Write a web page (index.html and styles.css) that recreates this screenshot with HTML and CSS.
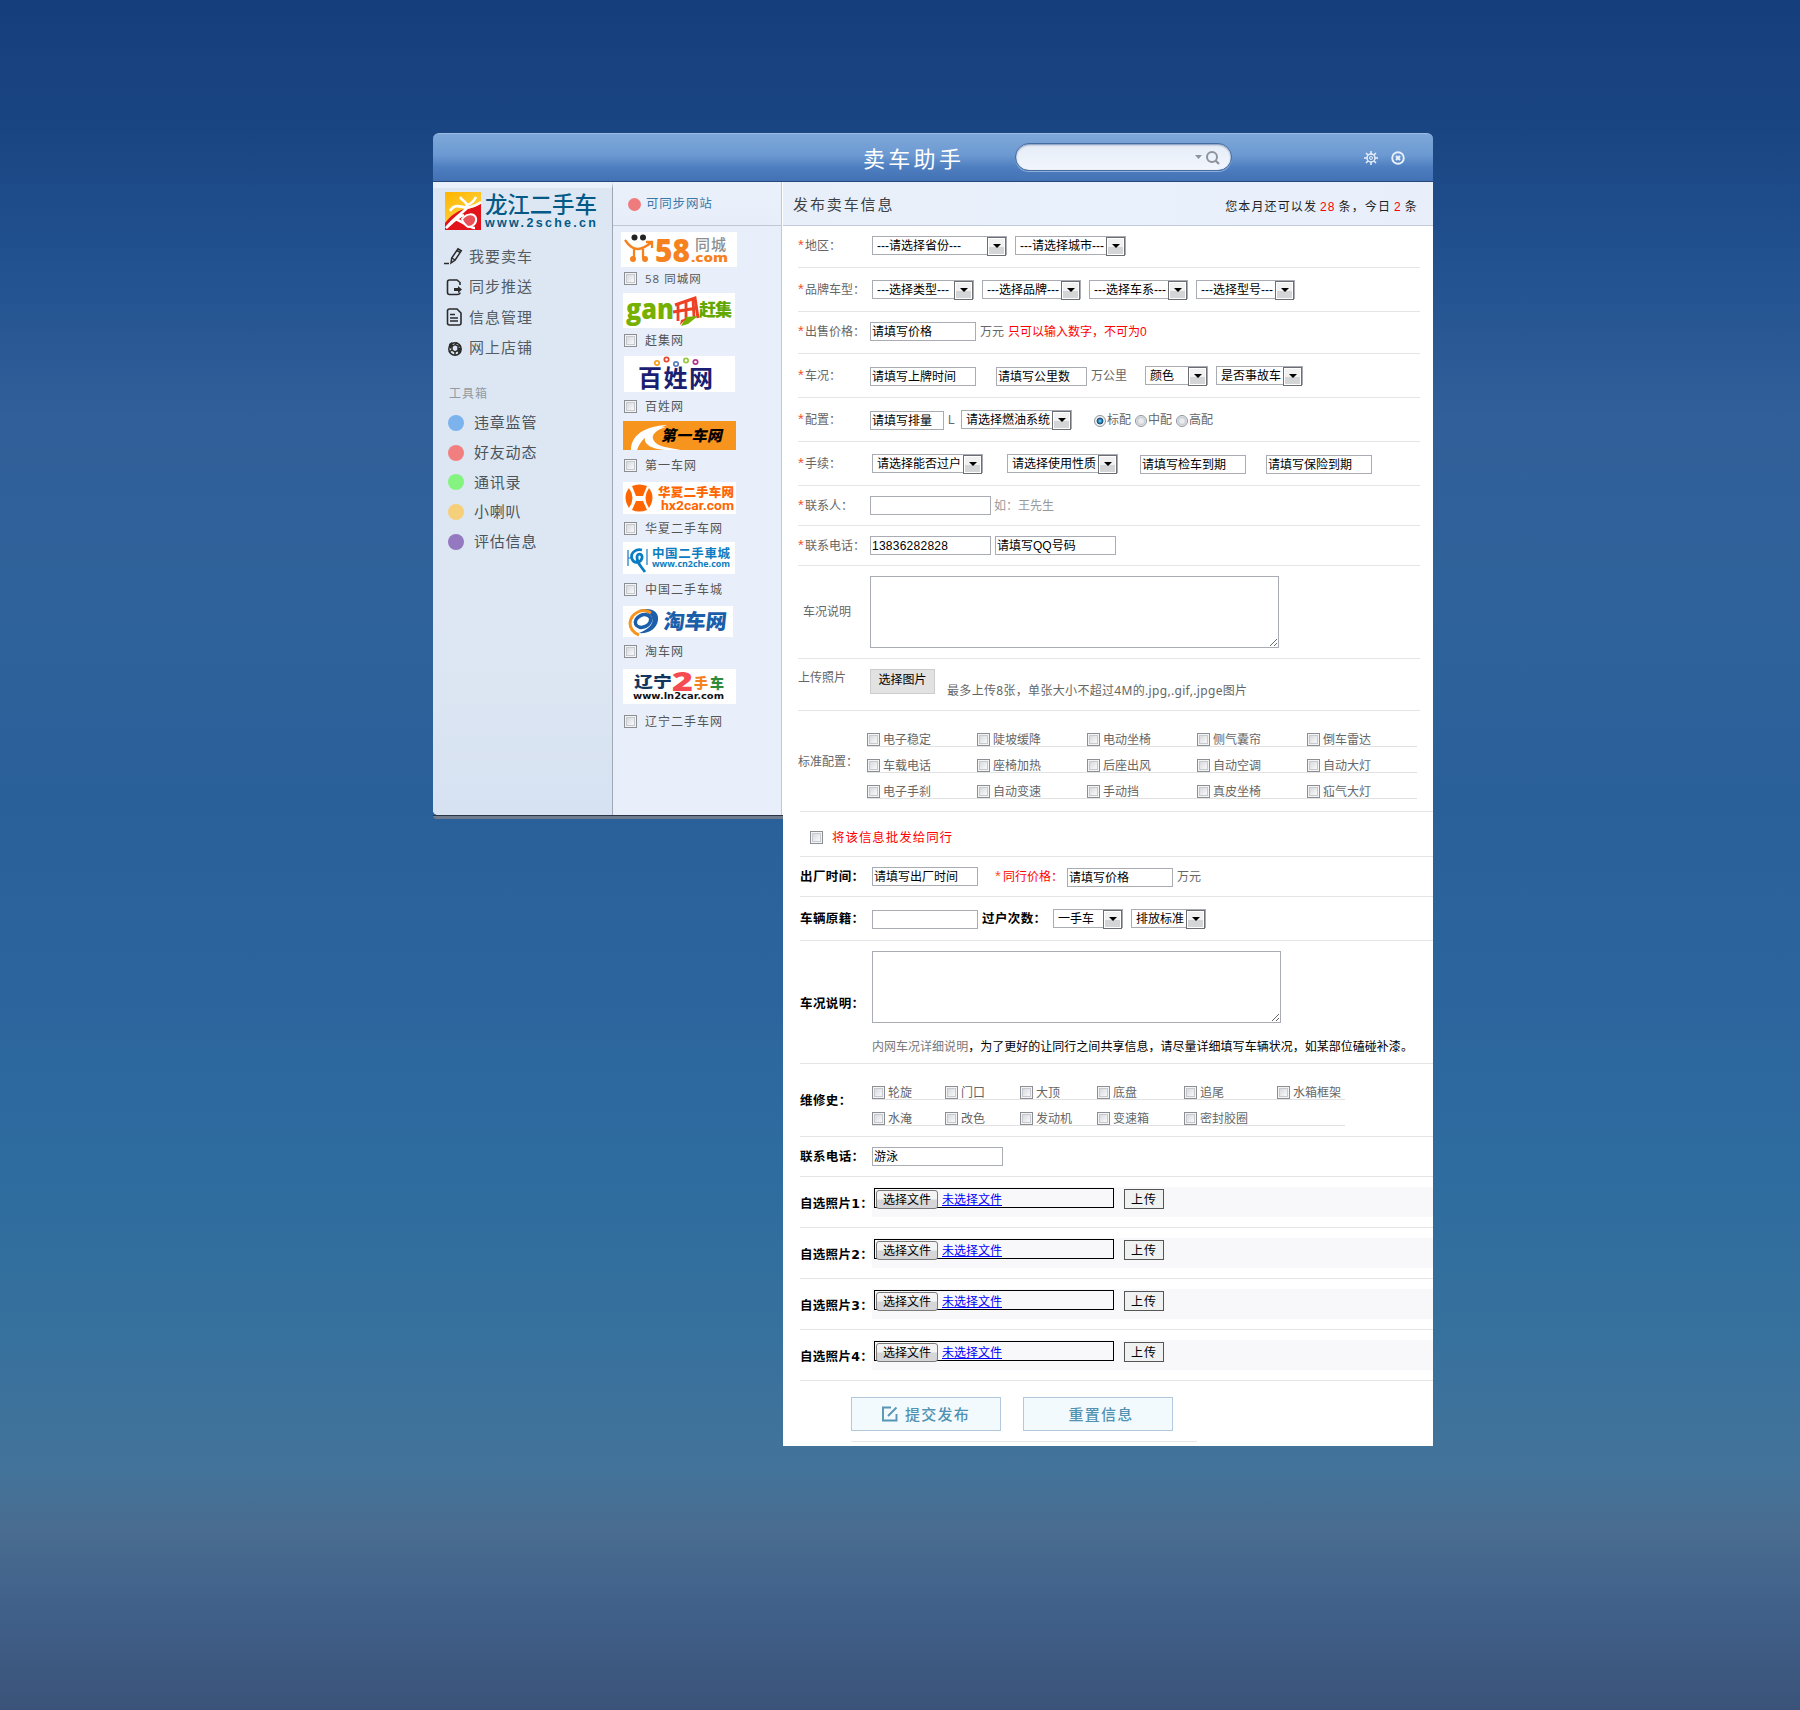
FILE: index.html
```html
<!DOCTYPE html>
<html lang="zh-CN">
<head>
<meta charset="utf-8">
<title>卖车助手</title>
<link rel="stylesheet" href="styles.css">
</head>
<body>
<div class="window">
  <header class="titlebar">
    <h1>卖车助手</h1>
    <div class="search">
      <svg width="26" height="16" viewBox="0 0 26 16"><path d="M0 5h7l-3.500 4z" fill="#8d939d"/><circle cx="17" cy="7" r="5" fill="none" stroke="#8d939d" stroke-width="2"/><path d="M20.500 10.500l3.500 3.500" stroke="#8d939d" stroke-width="2.200"/></svg>
    </div>
    <div class="tools">
      <svg width="14" height="14" viewBox="0 0 14 14" fill="none" stroke="#e9f0fa"><circle cx="7" cy="7" r="4" stroke-width="1.500"/><circle cx="7" cy="7" r="1.500"/><path d="M7 0v3M7 11v3M0 7h3M11 7h3M2 2l2 2M10 10l2 2M12 2l-2 2M4 10l-2 2" stroke-width="1.500"/></svg>
      <svg width="14" height="14" viewBox="0 0 14 14" fill="none" stroke="#e9f0fa"><circle cx="7" cy="7" r="5.800" stroke-width="1.900"/><path d="M5 5l4 4M9 5l-4 4" stroke-width="2.200"/></svg>
    </div>
  </header>

  <div class="body">
    <div class="rails">
      <div class="rail-cols">
        <nav class="nav">
          <svg class="brand" width="154" height="40" viewBox="0 0 154 40">
            <defs><linearGradient id="sun" x1="0" y1="0" x2=".6" y2="1"><stop offset="0" stop-color="#ffb400"/><stop offset="1" stop-color="#ffd84a"/></linearGradient></defs>
            <rect y="1" width="36" height="38" fill="url(#sun)"/>
            <path d="M0 32C6 24 14 19 20 18C26 18 31 15 36 13V39H0z" fill="#e3131c"/>
            <path d="M5 20C9 13 15 15 22 17M15 6c3 5 8 5 7 11C17 22 8 28 1 37C8 31 12 26 19 24M22 14C26 13 29 10 31 6M21 17C27 16 32 14 36 11M10 28c7 2 14 9 20 9" fill="none" stroke="#fff" stroke-width="2.600"/>
            <path d="M17 28c5-6 12-6 14-1c1 5-3 9-8 9c-3-2-5-4-6-8z" fill="#ea5058" stroke="#fff" stroke-width="2"/>
            <text x="40" y="22" class="brand-name" textLength="112">龙江二手车</text>
            <text x="40" y="36" class="brand-url" textLength="111">www.2sche.cn</text>
          </svg>
          <ul class="menu">
            <li><svg width="18" height="18" viewBox="0 0 18 18" fill="none" stroke="#2b2b2b" stroke-width="1.500"><path d="M-1 16.500h5"/><path d="M6 16l.7-5L13 1.800l3.300 2L10 13.200zM12 3.500l3.300 2M7 11l3 2"/></svg>我要卖车</li>
            <li><svg width="18" height="18" viewBox="0 0 18 18" fill="none" stroke="#2b2b2b" stroke-width="1.600"><path d="M15 7V4.500L12 2H4.500Q2.500 2 2.500 4v10.500q0 2 2 2H12q3 0 3-2"/><path d="M9 10h4V8l4 3.500-4 3.500V13H9z" fill="#2b2b2b" stroke="none"/></svg>同步推送</li>
            <li><svg width="18" height="18" viewBox="0 0 18 18" fill="none" stroke="#2b2b2b" stroke-width="1.600"><path d="M4.500 1H12l4 4v10q0 2-2 2H4.500q-2 0-2-2V3q0-2 2-2zM5 6.500h5M5 10h8M5 13h8"/></svg>信息管理</li>
            <li><svg width="18" height="18" viewBox="0 0 18 18" fill="none" stroke="#2b2b2b" stroke-width="1.500"><circle cx="10" cy="10" r="6.200"/><path d="M4 6.500l3 1M7 7.500l3-2 3 1.500v4.500L10 13l-3-2zM10 5.500l2-2M13 7l3 0M13 11.500l2 3M10 13v3M7 11l-3 2"/><path d="M4 5l3-2 1 4-3 3zM13 9l3-1v4l-3 2z" fill="#2b2b2b" stroke="none"/></svg>网上店铺</li>
          </ul>
          <h2>工具箱</h2>
          <ul class="toolbox">
            <li><i class="dot blue"></i>违章监管</li>
            <li><i class="dot red"></i>好友动态</li>
            <li><i class="dot green"></i>通讯录</li>
            <li><i class="dot yellow"></i>小喇叭</li>
            <li><i class="dot purple"></i>评估信息</li>
          </ul>
        </nav>

        <section class="sites">
          <h2><i class="dot small"></i>可同步网站</h2>
          <ul>
            <li class="s58">
              <svg width="116" height="35" viewBox="0 0 116 35"><rect width="116" height="35" fill="#fff"/><g fill="#222"><circle cx="13.500" cy="5.500" r="3"/><circle cx="22" cy="5.500" r="3"/></g><path d="M4 8c4 6 8 9 13 9s9-3 14-7M25 10h6v6M13 17v9M22 17v9" fill="none" stroke="#f5821f" stroke-width="2.300"/><circle cx="12" cy="27" r="3" fill="#f5821f"/><circle cx="24" cy="27" r="3" fill="#f5821f"/><text x="34" y="30" font-size="31" font-weight="800" fill="#f5821f" class="latin" textLength="35" lengthAdjust="spacingAndGlyphs">58</text><text x="74" y="18" font-size="15" font-weight="500" fill="#8b8f92" textLength="31">同城</text><text x="70" y="30" font-size="13" font-weight="800" fill="#f5821f" class="latin" textLength="37" lengthAdjust="spacingAndGlyphs">.com</text></svg>
              <label><input type="checkbox">58 同城网</label>
            </li>
            <li class="sganji">
              <svg width="112" height="35" viewBox="0 0 112 35"><rect width="112" height="35" fill="#fff"/><text x="3" y="26" font-size="28" font-weight="800" fill="#76b000" class="latin" textLength="48" lengthAdjust="spacingAndGlyphs">gan</text><path d="M52 12l20-7 3 20" fill="none" stroke="#ee4023" stroke-width="3"/><path d="M63 9v20M70 7l1 17M55 11v17M50 19l24-4" stroke="#ee4023" stroke-width="2.800"/><path d="M63 24l12-1-10 8-7 2z" fill="#76b000"/><path d="M57 32l7-7-6 2z" fill="#ee4023"/><text x="76" y="23" font-size="17" font-weight="900" fill="#62a800" textLength="33">赶集</text></svg>
              <label><input type="checkbox">赶集网</label>
            </li>
            <li class="sbaixing">
              <svg width="111" height="36" viewBox="0 0 111 36"><rect width="111" height="36" fill="#fff"/><g fill="none" stroke-width="1.700"><circle cx="33" cy="7" r="2.200" stroke="#f7a21b"/><circle cx="42.500" cy="3.500" r="2.200" stroke="#e8482c"/><circle cx="52" cy="8" r="2.200" stroke="#5a7fc0"/><circle cx="62" cy="4.500" r="2.200" stroke="#99c93c"/><circle cx="71.500" cy="6" r="2.200" stroke="#b5338a"/></g><text x="14" y="31" font-size="24" font-weight="700" fill="#1b1f72" textLength="75">百姓网</text></svg>
              <label><input type="checkbox">百姓网</label>
            </li>
            <li class="sdiyi">
              <svg width="113" height="29" viewBox="0 0 113 29"><rect width="113" height="29" fill="#f7941d"/><path d="M8 29C8 14 22 5 44 4C28 10 18 17 14 29zM22 16C25 9 32 6 43 6C33 9 27 14 31 20C35 26 47 27 58 29H42C30 28 20 24 22 16z" fill="#fff"/><text transform="translate(38 20) skewX(-12)" font-size="15" font-weight="900" fill="#000" textLength="61">第一车网</text></svg>
              <label><input type="checkbox">第一车网</label>
            </li>
            <li class="shx">
              <svg width="113" height="32" viewBox="0 0 113 32"><rect width="113" height="32" fill="#fff"/><g fill="#f60"><path d="M9 4q7-3 15 0l-4 10h-7zM9 28q7 3 15 0l-4-9h-7zM6 6q-7 9 0 20q7-10 0-20zM26 6q7 9 0 20q-7-10 0-20z"/></g><text x="35" y="15" font-size="12.500" font-weight="900" fill="#f60" textLength="76">华夏二手车网</text><text x="38" y="27.500" font-size="12" font-weight="700" fill="#f60" class="robo" textLength="73" lengthAdjust="spacingAndGlyphs">hx2car.com</text></svg>
              <label><input type="checkbox">华夏二手车网</label>
            </li>
            <li class="scn2">
              <svg width="112" height="32" viewBox="0 0 112 32"><rect width="112" height="32" fill="#fff"/><g fill="none" stroke="#0a7dc2"><path d="M5 8v16M24 7v16M5 16h3" stroke-width="1.200"/><path d="M19 8c-7-2-12 4-10 9c2 5 9 4 10-1c1-5-5-5-5-1c0 6 3 8 8 15" stroke-width="2.800"/></g><text x="29" y="16" font-size="12.500" font-weight="700" fill="#0a7dc2" textLength="78">中国二手車城</text><text x="29" y="25" font-size="8.500" font-weight="700" fill="#0a7dc2" class="latin" textLength="78" lengthAdjust="spacingAndGlyphs">www.cn2che.com</text></svg>
              <label><input type="checkbox">中国二手车城</label>
            </li>
            <li class="stao">
              <svg width="110" height="31" viewBox="0 0 110 31"><rect width="110" height="31" fill="#fff"/><path d="M16 4c13-3 20 2 19 10c-1 9-10 14-19 13c10-4 15-9 13-15c-1-4-6-6-13-8z" fill="#1b5faa"/><path d="M28 7C20 1 8 7 7 17c0 5 2 9 9 12" fill="none" stroke="#f7941d" stroke-width="3"/><ellipse cx="20" cy="15" rx="8" ry="6" fill="none" stroke="#1b5faa" stroke-width="3.500" transform="rotate(-25 20 15)"/><text transform="translate(40 23) skewX(-6)" font-size="21" font-weight="900" fill="#1b5faa" textLength="63">淘车网</text></svg>
              <label><input type="checkbox">淘车网</label>
            </li>
            <li class="sln">
              <svg width="113" height="35" viewBox="0 0 113 35"><rect width="113" height="35" fill="#fff"/><g font-weight="900"><text x="11" y="18" font-size="15" fill="#12365e" textLength="38" lengthAdjust="spacingAndGlyphs">辽宁</text><text x="49" y="22" font-size="27" fill="#f64b50" class="latin" textLength="21" lengthAdjust="spacingAndGlyphs">2</text><text x="71" y="19" font-size="14" fill="#f58220">手</text><text x="87" y="19" font-size="14" fill="#2e8b3a">车</text></g><text x="10" y="30" font-size="8.500" font-weight="700" fill="#111" class="wide" textLength="91" lengthAdjust="spacingAndGlyphs">www.ln2car.com</text></svg>
              <label><input type="checkbox">辽宁二手车网</label>
            </li>
          </ul>
        </section>
      </div>
      <div class="rail-foot"></div>
    </div>

    <main>
      <div class="subhead">
        <h2>发布卖车信息</h2>
        <p>您本月还可以发 <b>28</b> 条，今日 <b>2</b> 条</p>
      </div>

      <form class="basic">
        <div class="row region"><label><em>*</em>地区：</label><span class="select w135">---请选择省份---</span><span class="select w111 gap8">---请选择城市---</span></div>
        <div class="row model"><label><em>*</em>品牌车型：</label><span class="select w102">---选择类型---</span><span class="select w99 gap8">---选择品牌---</span><span class="select w99 gap8">---选择车系---</span><span class="select w99 gap8">---选择型号---</span></div>
        <div class="row price"><label><em>*</em>出售价格：</label><input class="w106" value="请填写价格"><span class="unit">万元</span><span class="warn">只可以输入数字，不可为0</span></div>
        <div class="row condition"><label><em>*</em>车况：</label><input class="w106" value="请填写上牌时间"><input class="w91 gap20" value="请填写公里数"><span class="unit">万公里</span><span class="select w63 gap18">颜色</span><span class="select w87 gap8">是否事故车</span></div>
        <div class="row config"><label><em>*</em>配置：</label><input class="w74" value="请填写排量"><span class="unit litre">L</span><span class="select w111">请选择燃油系统</span><span class="radios"><label><input type="radio" name="trim" checked>标配</label><label><input type="radio" name="trim">中配</label><label><input type="radio" name="trim">高配</label></span></div>
        <div class="row papers"><label><em>*</em>手续：</label><span class="select w111">请选择能否过户</span><span class="select w111 gap24">请选择使用性质</span><input class="w106 gap22" value="请填写检车到期"><input class="w106 gap20" value="请填写保险到期"></div>
        <div class="row contact"><label><em>*</em>联系人：</label><input class="w121"><span class="hint">如：王先生</span></div>
        <div class="row contact"><label><em>*</em>联系电话：</label><input class="w121 phone" value="13836282828"><input class="w121 gap4" value="请填写QQ号码"></div>
        <div class="row notes"><label>车况说明</label><textarea></textarea></div>
        <div class="row upload"><label>上传照片</label><button type="button">选择图片</button><span class="rule">最多上传8张，单张大小不超过4M的.jpg,.gif,.jpge图片</span></div>
        <div class="row features">
          <label>标准配置：</label>
          <div class="checks">
            <div><label><input type="checkbox">电子稳定</label><label><input type="checkbox">陡坡缓降</label><label><input type="checkbox">电动坐椅</label><label><input type="checkbox">侧气囊帘</label><label><input type="checkbox">倒车雷达</label></div>
            <div><label><input type="checkbox">车载电话</label><label><input type="checkbox">座椅加热</label><label><input type="checkbox">后座出风</label><label><input type="checkbox">自动空调</label><label><input type="checkbox">自动大灯</label></div>
            <div><label><input type="checkbox">电子手刹</label><label><input type="checkbox">自动变速</label><label><input type="checkbox">手动挡</label><label><input type="checkbox">真皮坐椅</label><label><input type="checkbox">疝气大灯</label></div>
          </div>
        </div>
      </form>

      <form class="trade">
        <div class="row share"><label><input type="checkbox">将该信息批发给同行</label></div>
        <div class="row made"><label>出厂时间：</label><input class="w106" value="请填写出厂时间"><span class="peer"><em>*</em>同行价格：</span><input class="w106 drop" value="请填写价格"><span class="unit">万元</span></div>
        <div class="row origin"><label>车辆原籍：</label><input class="w106 drop"><b>过户次数：</b><span class="select w70">一手车</span><span class="select w75 gap8">排放标准</span></div>
        <div class="row remarks"><label>车况说明：</label><div><textarea></textarea><p><span>内网车况详细说明</span>，为了更好的让同行之间共享信息，请尽量详细填写车辆状况，如某部位磕碰补漆。</p></div></div>
        <div class="row repairs">
          <label>维修史：</label>
          <div class="checks">
            <div><label><input type="checkbox">轮旋</label><label><input type="checkbox">门口</label><label><input type="checkbox">大顶</label><label><input type="checkbox">底盘</label><label><input type="checkbox">追尾</label><label><input type="checkbox">水箱框架</label></div>
            <div><label><input type="checkbox">水淹</label><label><input type="checkbox">改色</label><label><input type="checkbox">发动机</label><label><input type="checkbox">变速箱</label><label><input type="checkbox">密封胶圈</label></div>
          </div>
        </div>
        <div class="row phone2"><label>联系电话：</label><input class="w131" value="游泳"></div>
        <div class="row photo"><label>自选照片1：</label><div class="strip"><div class="file"><button type="button">选择文件</button><a>未选择文件</a></div><button type="button" class="send">上传</button></div></div>
        <div class="row photo"><label>自选照片2：</label><div class="strip"><div class="file"><button type="button">选择文件</button><a>未选择文件</a></div><button type="button" class="send">上传</button></div></div>
        <div class="row photo"><label>自选照片3：</label><div class="strip"><div class="file"><button type="button">选择文件</button><a>未选择文件</a></div><button type="button" class="send">上传</button></div></div>
        <div class="row photo"><label>自选照片4：</label><div class="strip"><div class="file"><button type="button">选择文件</button><a>未选择文件</a></div><button type="button" class="send">上传</button></div></div>
        <div class="actions">
          <button type="button"><svg width="16" height="16" viewBox="0 0 16 16" fill="none" stroke="#5796b5" stroke-width="1.900"><path d="M9 1.500H1v13h13.500V8M6 10L14.500 1.500"/></svg>提交发布</button>
          <button type="button" class="reset">重置信息</button>
        </div>
      </form>
    </main>
  </div>
</div>
</body>
</html>
```
FILE: styles.css
```css
* { box-sizing: border-box; }

body {
  margin: 0;
  height: 1710px;
  padding: 133px 0 0 433px;
  font: 12px/21px "Liberation Sans", "Noto Sans CJK SC", sans-serif;
  color: #666;
  background: linear-gradient(#153e7c 0, #1a4583 130px, #235391 280px, #315f99 420px, #2f629a 600px, #2a609a 800px, #2c659d 1000px, #2e6c9f 1180px, #37719d 1340px, #43739a 1470px, #496c90 1530px, #40608a 1610px, #3b5379 1710px);
}

h1, h2, p, ul { margin: 0; padding: 0; font-weight: 400; }
ul { list-style: none; }
em { font-style: normal; font-size: 15px; line-height: 10px; color: #f4502e; }
svg { display: block; flex: none; overflow: visible; }
svg text { font-family: "Noto Sans CJK SC", sans-serif; }
svg .latin { font-family: "Open Sans", sans-serif; }
svg .robo { font-family: Roboto, sans-serif; }
svg .wide { font-family: "DejaVu Sans", sans-serif; }
input, textarea, button { font: inherit; margin: 0; }

.window { width: 1000px; }

/* title bar */
.titlebar {
  height: 49px;
  display: flex;
  border-radius: 6px 6px 0 0;
  border-top: 1px solid #9dbce2;
  border-bottom: 1px solid #27477c;
  background: linear-gradient(#7ea8da, #6b99d1 45%, #4f7fc0 70%, #4271b4);
}
.titlebar h1 {
  margin-left: 430px;
  width: 152px;
  font-size: 22px;
  line-height: 51px;
  letter-spacing: 3.300px;
  white-space: nowrap;
  color: #fff;
}
.search {
  width: 217px;
  height: 28px;
  margin-top: 9px;
  padding: 6px 10px 0 0;
  display: flex;
  justify-content: flex-end;
  border: 1px solid #456ba0;
  border-radius: 14px;
  background: linear-gradient(#e6edf7, #f2f6fd);
  box-shadow: 0 1px 0 #8eb0dc, inset 0 1px 2px #7a92b5;
}
.tools { display: flex; gap: 13px; margin: 17px 0 0 132px; }

.body { display: flex; align-items: flex-start; }

/* left rails */
.rails { width: 350px; }
.rail-cols { display: flex; height: 633px; background: #fff; border-radius: 0 0 0 5px; }
.rail-foot { height: 4px; border-top: 1px solid #2b3445; background: #6e7b8c; border-radius: 0 0 0 4px; }
.nav {
  width: 180px;
  padding: 9px 0 0 12px;
  border-top: 6px solid #ebf1fb;
  border-right: 1px solid #a0a7b4;
  border-radius: 0 0 0 5px;
  background: linear-gradient(#dde7f4, #dde7f3 75%, #d6e1f2);
}
.brand { margin-top: -6px; }
.brand-name { font-size: 22.500px; font-weight: 500; fill: #045a87; }
.brand .brand-url { font-family: "Liberation Sans", sans-serif; font-size: 12.500px; font-weight: 700; fill: #045a87; }
.menu { margin-top: 10px; }
.menu li {
  display: flex;
  align-items: center;
  gap: 6px;
  height: 30.500px;
  font-size: 15px;
  letter-spacing: 1px;
  color: #545c62;
}
.nav h2 { margin: 22px 0 0 4px; font-size: 12px; line-height: 19px; letter-spacing: 1px; color: #949a9f; }
.toolbox { margin: 4px 0 0 3px; }
.toolbox li {
  display: flex;
  align-items: center;
  gap: 10px;
  height: 29.700px;
  font-size: 15px;
  letter-spacing: .8px;
  color: #4b545a;
}
.dot { width: 16px; height: 16px; border-radius: 50%; }
.dot.blue { background: #7cb3ec; }
.dot.red { background: #f17f80; }
.dot.green { background: #84f380; }
.dot.yellow { background: #f6cf7b; }
.dot.purple { background: #9478c0; }
.dot.small { width: 13px; height: 13px; background: #ee7c7e; }

.sites { width: 169px; border-right: 1px solid #c3c8d4; background: #e8effa; }
.sites h2 {
  height: 44px;
  padding: 1px 0 0 15px;
  display: flex;
  align-items: center;
  gap: 5px;
  font-size: 12.500px;
  letter-spacing: .8px;
  color: #3a78a6;
  background: linear-gradient(#eaf1fb, #e7eef9);
  border-bottom: 1px solid #c0c7d4;
}
.sites ul { padding: 6px 0 0 10px; }
.sites li label {
  display: flex;
  gap: 8px;
  height: 13px;
  margin-left: 1px;
  line-height: 14px;
  letter-spacing: 1px;
  color: #555;
}
.s58 { margin-left: -2px; }
.sites .s58 label { margin: 5px 0 0 3px; font-family: "Open Sans", "Noto Sans CJK SC", sans-serif; font-size: 11.500px; }
.sganji { margin-top: 8px; }
.sganji label { margin-top: 6px; }
.sbaixing { margin-top: 9px; }
.sbaixing svg { margin-left: 1px; }
.sbaixing label { margin-top: 8px; }
.sdiyi { margin-top: 8px; }
.sdiyi label { margin-top: 9px; }
.shx { margin-top: 10px; }
.shx label { margin-top: 8px; }
.scn2 { margin-top: 7px; }
.scn2 label { margin-top: 9px; }
.stao { margin-top: 10px; }
.stao label { margin-top: 8px; }
.sln { margin-top: 11px; }
.sln label { margin-top: 11px; }

/* main form */
main { width: 650px; height: 1264px; background: #fff; }
.subhead {
  height: 44px;
  padding: 0 15px 0 10px;
  display: flex;
  justify-content: space-between;
  border-bottom: 1px solid #c3cad8;
  background: linear-gradient(90deg, #e8eff9, #e9f1fc 50%, #e8effa);
}
.subhead h2 { font-size: 15px; line-height: 45px; letter-spacing: 1.900px; color: #3e4145; }
.subhead p { font-size: 12px; line-height: 51px; letter-spacing: 1.130px; word-spacing: -1.500px; color: #222; }
.subhead b { font-weight: 400; color: #f00; }

.row { display: flex; align-items: flex-start; border-bottom: 1px solid #e5e5e5; }
.row > label { width: 72px; flex: none; white-space: nowrap; }
.basic { padding: 0 13px 0 15px; }
.trade { padding-left: 17px; }
.trade .row > label, .trade .row > b { font-weight: 700; font-size: 12.500px; letter-spacing: .4px; color: #000; }
.row > label em { display: inline-block; width: 7px; }

.row input:not([type]), textarea {
  height: 19px;
  padding: 1px 1px 0;
  border: 1px solid #a9acb2;
  border-radius: 0;
  background: #fff;
  color: #000;
  outline: 0;
}
.select {
  position: relative;
  flex: none;
  height: 19px;
  padding-left: 4px;
  border: 1px solid #a9acb2;
  background: #fff;
  color: #000;
  line-height: 19px;
  white-space: nowrap;
}
.select::before {
  content: "";
  position: absolute;
  right: 0;
  top: 0;
  width: 17px;
  height: 17px;
  border: 1px solid #6b6f73;
  box-shadow: inset 0 0 0 1px #fff;
  background: linear-gradient(#f1f1f1 50%, #d3d5d7 55%);
}
.select::after {
  content: "";
  position: absolute;
  right: 5px;
  top: 7px;
  border: 4px solid transparent;
  border-top-color: #000;
  border-bottom: 0;
}

.w63 { width: 63px; } .w70 { width: 70px; } .w74 { width: 74px; } .w75 { width: 75px; }
.w87 { width: 87px; } .w91 { width: 91px; } .w99 { width: 99px; } .w102 { width: 102px; }
.w106 { width: 106px; } .w111 { width: 111px; } .w121 { width: 121px; } .w131 { width: 131px; } .w135 { width: 135px; }
.gap4 { margin-left: 4px; } .gap8 { margin-left: 8px; } .gap18 { margin-left: 18px; }
.gap20 { margin-left: 20px; } .gap22 { margin-left: 22px; } .gap24 { margin-left: 24px; }

.region { height: 42px; padding-top: 10px; }
.model { height: 44px; padding-top: 12px; }
.region > label, .model > label, .papers > label { width: 74px; }
.price { height: 42px; padding-top: 10px; }
.condition, .config, .papers { height: 44px; padding-top: 12px; }
.condition input, .config > input, .papers input, .drop { margin-top: 1px; }
.contact { height: 40px; padding-top: 10px; }
.phone { letter-spacing: .25px; color: #113; }
.unit { margin-left: 4px; }
.warn { margin-left: 4px; color: #f00; }
.hint { margin-left: 3px; color: #999; }
.litre { width: 13px; }
.radios { display: flex; gap: 4px; margin-left: 22px; }
.radios label { display: flex; align-items: center; gap: 1px; }

input[type="checkbox"] {
  appearance: none;
  flex: none;
  width: 13px;
  height: 13px;
  border: 1px solid #8b8f94;
  background: linear-gradient(135deg, #cdd1d8, #f6f6f6 75%);
  box-shadow: inset 0 0 0 1px #f4f4f4, inset 0 0 0 2px #c6c9ce;
}
input[type="radio"] {
  appearance: none;
  width: 12px;
  height: 12px;
  border: 1px solid #8f949b;
  border-radius: 50%;
  background: radial-gradient(#e9ebee 30%, #c6cbd2 55%, #f3f3f3 70%);
}
input[type="radio"]:checked { background: radial-gradient(circle at 50% 50%, #51bdf0 10%, #123a63 45%, #eef1f4 52%); }

textarea { display: block; width: 409px; height: 72px; resize: vertical; }
.row textarea { height: 72px; }
.notes { height: 93px; padding-top: 10px; }
.notes > label { padding: 26px 0 0 5px; }
.upload { height: 52px; padding-top: 10px; }
.upload > label { margin-top: -1px; }
.upload button {
  width: 65px;
  height: 25px;
  padding: 0 0 3px;
  border: 1px solid #ccc;
  background: #e2e2e2;
  line-height: 20px;
  color: #000;
}
.rule { margin: 11px 0 0 12px; letter-spacing: .32px; font-family: "Noto Sans", "Noto Sans CJK SC", sans-serif; }

.checks { flex: none; }
.checks > div { display: grid; height: 14px; margin-bottom: 12px; border-bottom: 1px solid #e2e2e2; }
.checks label { display: flex; gap: 3px; height: 13px; line-height: 14px; }
.features { height: 101px; padding-top: 22px; border-bottom: 0; }
.features > label { width: 69px; padding-top: 19px; }
.features .checks { width: 550px; }
.features .checks > div { grid-template-columns: repeat(5, 110px); }

.share { height: 46px; margin-top: -1px; padding: 19px 0 0 10px; border-top: 1px solid #e5e5e5; }
.share > label { display: flex; gap: 9px; height: 13px; line-height: 14px; }
.trade .share > label { font-size: 12.500px; font-weight: 400; letter-spacing: .95px; color: #f00; }
.made { height: 40px; padding-top: 10px; }
.peer { margin-left: 17px; width: 72px; white-space: nowrap; color: #f00; }
.peer em { display: inline-block; width: 8px; }
.origin { height: 44px; padding-top: 12px; }
.origin > b { margin-left: 4px; width: 71px; white-space: nowrap; }
.remarks { height: 123px; padding-top: 10px; }
.remarks > label { padding-top: 43px; }
.remarks p { margin-top: 14px; letter-spacing: .02px; color: #000; white-space: nowrap; }
.remarks p span { color: #777; }
.repairs { height: 73px; padding-top: 22px; }
.repairs > label { padding-top: 5px; }
.repairs .checks { width: 473px; }
.repairs .checks > div { grid-template-columns: 73px 75px 77px 87px 93px 68px; }
.phone2 { height: 40px; padding-top: 10px; }

.photo { height: 51px; padding-top: 10px; }
.trade .photo > label { padding-top: 6px; font-family: "DejaVu Sans", "Noto Sans CJK SC", sans-serif; letter-spacing: .3px; }
.strip { flex: 1; height: 30px; padding: 1px 0 0 2px; display: flex; align-items: flex-start; background: #f8f8fa; }
.file { width: 240px; height: 20px; padding: 1px; display: flex; gap: 4px; border: 1px solid #000; }
.file button {
  width: 62px;
  height: 19px;
  padding: 1px 0 0;
  border: 1px solid #7b7b7b;
  border-radius: 3px;
  background: linear-gradient(#f4f4f4 45%, #d6d6d9 55%);
  line-height: 17px;
  color: #000;
}
.file a { color: #00f; text-decoration: underline; line-height: 21px; }
.send {
  width: 40px;
  height: 20px;
  margin: 1px 0 0 10px;
  padding: 1px 0 0;
  border: 1px solid #555;
  background: #f0f1f1;
  line-height: 18px;
  letter-spacing: 1px;
  color: #000;
}
.actions {
  display: flex;
  gap: 22px;
  width: 346px;
  height: 61px;
  margin-left: 51px;
  padding-top: 16px;
  border-bottom: 1px solid #e5e5e5;
}
.actions button {
  width: 150px;
  height: 34px;
  padding: 0;
  display: flex;
  align-items: center;
  justify-content: center;
  gap: 7px;
  border: 1px solid #b2c9dd;
  background: #f3fafe;
  font-size: 15px;
  font-weight: 500;
  letter-spacing: 1.200px;
  color: #5191b1;
}
.actions .reset { padding-left: 6px; }
```
